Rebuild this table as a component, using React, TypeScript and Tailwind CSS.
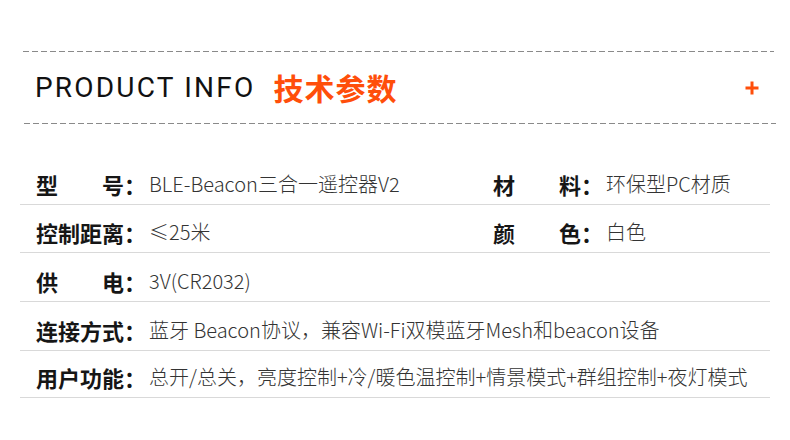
import React from "react";

const cjk = { fontFamily: '"Noto Sans CJK SC", "Noto Sans", sans-serif' };

function Label({ chars }: { chars: string[] }) {
  return (
    <span className="flex shrink-0 text-[22px] font-bold leading-[26px] text-[#161616]">
      <span className="flex w-[88px] justify-between">
        {chars.map((c, i) => (
          <span key={i}>{c}</span>
        ))}
      </span>
      <span className="w-[22px]">：</span>
    </span>
  );
}

function Cell({ chars, value, width }: { chars: string[]; value: string; width?: string }) {
  return (
    <div className={`flex items-end ${width ?? ""}`}>
      <Label chars={chars} />
      <span className="ml-[3px] whitespace-nowrap text-[20px] font-light leading-[26px] text-[#333333]">{value}</span>
    </div>
  );
}

function Dashed({ cls }: { cls: string }) {
  return (
    <div
      className={`h-px bg-[linear-gradient(to_right,#8a8a8a_0_6px,transparent_6px_9px)] bg-[length:9px_1px] bg-repeat-x ${cls}`}
    />
  );
}

export default function App() {
  const rows: { h: string; cells: { chars: string[]; value: string }[] }[] = [
    {
      h: "h-[49px]",
      cells: [
        { chars: ["型", "号"], value: "BLE-Beacon三合一遥控器V2" },
        { chars: ["材", "料"], value: "环保型PC材质" },
      ],
    },
    {
      h: "h-[48px]",
      cells: [
        { chars: ["控", "制", "距", "离"], value: "≤25米" },
        { chars: ["颜", "色"], value: "白色" },
      ],
    },
    { h: "h-[49px]", cells: [{ chars: ["供", "电"], value: "3V(CR2032)" }] },
    {
      h: "h-[49px]",
      cells: [{ chars: ["连", "接", "方", "式"], value: "蓝牙 Beacon协议，兼容Wi-Fi双模蓝牙Mesh和beacon设备" }],
    },
    {
      h: "h-[47px]",
      cells: [
        {
          chars: ["用", "户", "功", "能"],
          value: "总开/总关，亮度控制+冷/暖色温控制+情景模式+群组控制+夜灯模式",
        },
      ],
    },
  ];

  return (
    <div className="h-[440px] w-[790px] overflow-hidden bg-white pt-[51px]" style={cjk}>
      <Dashed cls="ml-[23px] w-[751px]" />
      <div className="flex h-[71px] items-center pl-[35px] pr-[31px]">
        <span
          className="text-[28px] font-normal tracking-[2.2px] text-[#111111]"
          style={{ fontFamily: 'Roboto, "Liberation Sans", sans-serif' }}
        >
          PRODUCT INFO
        </span>
        <span className="ml-[18px] text-[30px] font-bold tracking-[1px] text-[#ff4e0a]">技术参数</span>
        <span className="ml-auto flex h-[14px] w-[14px] items-center justify-center">
          <svg width="14" height="14" viewBox="0 0 14 14">
            <rect x="0.5" y="5.5" width="13" height="3" fill="#ff4e0a" />
            <rect x="5.5" y="0.5" width="3" height="13" fill="#ff4e0a" />
          </svg>
        </span>
      </div>
      <Dashed cls="ml-[24px] w-[752px]" />
      <div className="ml-[20px] mt-[32px] w-[750px]">
        {rows.map((r, i) => (
          <div key={i} className={`flex items-end border-b border-[#d9d9d9] pb-[7px] pl-[16px] ${r.h}`}>
            {r.cells.map((c, j) => (
              <Cell key={j} chars={c.chars} value={c.value} width={r.cells.length > 1 && j === 0 ? "w-[457px]" : ""} />
            ))}
          </div>
        ))}
      </div>
    </div>
  );
}
